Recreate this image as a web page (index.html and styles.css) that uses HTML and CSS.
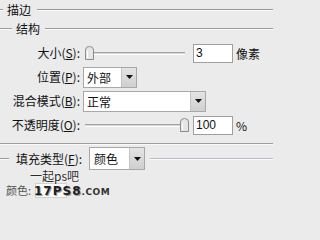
FILE: index.html
```html
<!DOCTYPE html>
<html lang="zh">
<head>
<meta charset="utf-8">
<link rel="stylesheet" href="styles.css">
</head>
<body>
<div class="panel">
  <div class="legend l1"><span class="rule short"></span><span class="ltext">描边</span><span class="rule grow"></span></div>
  <div class="legend l2"><span class="rule mid"></span><span class="ltext">结构</span><span class="rule grow"></span></div>
  <div class="grid">
    <div class="label">大小(<u>S</u>):</div>
    <div class="ctrl">
      <div class="slider"><span class="track"></span><svg class="thumb t-left" width="9" height="14" viewBox="0 0 9 14"><path d="M0.5 13.5 V4 Q0.5 0.5 4.5 0.5 Q8.5 0.5 8.5 4 V13.5 Z" fill="#e6e6e6" stroke="#8c8c8c"/><path d="M2.5 12 V5" stroke="#fff"/></svg></div>
      <div class="num">3</div><div class="unit">像素</div>
    </div>
    <div class="label">位置(<u>P</u>):</div>
    <div class="ctrl">
      <div class="select s-small"><span class="stext">外部</span><span class="arrow"><svg width="7" height="4" viewBox="0 0 7 4"><path d="M0 0 H7 L3.5 4 Z" fill="#111"/></svg></span></div>
    </div>
    <div class="label">混合模式(<u>B</u>):</div>
    <div class="ctrl">
      <div class="select s-wide"><span class="stext">正常</span><span class="arrow"><svg width="7" height="4" viewBox="0 0 7 4"><path d="M0 0 H7 L3.5 4 Z" fill="#111"/></svg></span></div>
    </div>
    <div class="label">不透明度(<u>O</u>):</div>
    <div class="ctrl">
      <div class="slider"><span class="track"></span><svg class="thumb t-right" width="9" height="14" viewBox="0 0 9 14"><path d="M0.5 13.5 V4 Q0.5 0.5 4.5 0.5 Q8.5 0.5 8.5 4 V13.5 Z" fill="#e6e6e6" stroke="#8c8c8c"/><path d="M2.5 12 V5" stroke="#fff"/></svg></div>
      <div class="num">100</div><div class="unit">%</div>
    </div>
  </div>
  <div class="sep"></div>
  <div class="legend l3">
    <span class="rule tiny"></span>
    <span class="ltext fill-label">填充类型(<u>F</u>):</span>
    <div class="select s-fill"><span class="stext">颜色</span><span class="arrow"><svg width="7" height="4" viewBox="0 0 7 4"><path d="M0 0 H7 L3.5 4 Z" fill="#111"/></svg></span></div>
    <span class="rule grow lav"></span>
  </div>
  <div class="under">
    <span class="color-label">颜色:</span><span class="swatch"></span>
  </div>
  <div class="watermark">
    <div class="wm1">一起ps吧</div>
    <div class="wm2"><span class="big">17PS8</span><span class="small">.COM</span></div>
  </div>
</div>
</body>
</html>
```
FILE: styles.css
```css
html, body {
  margin: 0;
  padding: 0;
  background: #ebebeb;
}
body {
  width: 273px;
  height: 216px;
  overflow: hidden;
  font-family: "Noto Sans CJK SC", "Noto Sans", sans-serif;
  font-size: 12px;
  color: #111;
}
u { text-decoration: underline; }
.panel {
  position: relative;
  display: flex;
  flex-direction: column;
  height: 216px;
}
.legend {
  display: flex;
  align-items: center;
}
.l1 { height: 20px; }
.l2 { height: 18px; margin-bottom: 3px; }
.rule {
  height: 0;
  border-top: 1px solid #9a9a9a;
  border-bottom: 1px solid #fbfbfb;
}
.rule.short { width: 3px; margin-right: 4px; }
.rule.mid { width: 12px; margin-right: 4px; }
.rule.tiny { width: 9px; margin-right: 7px; }
.rule.grow { flex: 1; }
.l1 .ltext { margin-right: 6px; line-height: 14px; }
.l2 .ltext { margin-right: 5px; line-height: 14px; }
.grid {
  display: grid;
  grid-template-columns: 80px 1fr;
  grid-auto-rows: 24px;
}
.label {
  text-align: right;
  line-height: 24px;
  white-space: nowrap;
}
.ctrl {
  display: flex;
  align-items: center;
  padding-left: 3px;
}
.slider {
  position: relative;
  width: 100px;
  height: 16px;
  margin-left: 2px;
  display: flex;
  align-items: center;
}
.track {
  display: block;
  width: 100%;
  height: 1px;
  background: #d4d4d4;
  border-top: 1px solid #a4a4a4;
  border-bottom: 1px solid #fff;
}
.thumb {
  position: absolute;
  top: 1px;
}
.t-left { left: 0; }
.t-right { left: 95px; }
.num {
  margin-left: 8px;
  width: 36px;
  height: 17px;
  background: #fff;
  border: 1px solid #9f9f9f;
  font-family: "Liberation Sans", Arial, sans-serif;
  font-size: 12px;
  line-height: 17px;
  padding-left: 2px;
  box-sizing: content-box;
}
.unit {
  margin-left: 3px;
  line-height: 17px;
}
.select {
  display: flex;
  height: 19px;
  background: #fff;
  border: 1px solid #a8a8a8;
}
.stext {
  flex: 1;
  padding-left: 3px;
  line-height: 19px;
}
.arrow {
  width: 14px;
  border-left: 1px solid #c4c4c4;
  background: linear-gradient(#e4e4e4, #cfcfcf);
  display: flex;
  align-items: center;
  justify-content: center;
}
.s-small { width: 52px; }
.s-wide { width: 121px; }
.sep {
  margin-top: 6px;
  height: 0;
  border-top: 1px solid #9c9c9c;
  border-bottom: 1px solid #fafafa;
}
.l3 { height: 25px; margin-top: 1px; }
.fill-label { line-height: 14px; margin-right: 7px; white-space: nowrap; }
.s-fill { width: 54px; height: 21px; margin-right: 5px; }
.s-fill .stext { line-height: 21px; padding-left: 4px; }
.rule.lav { border-top-color: #b9b9c9; }
.under {
  display: flex;
  align-items: center;
  margin-top: 12px;
  padding-left: 6px;
  height: 14px;
}
.color-label { color: #555; font-size: 11px; }
.swatch {
  margin-left: 4px;
  width: 30px;
  height: 13px;
  background: #fbfbfb;
  border: 1px solid #cfcfcf;
}
.watermark {
  position: absolute;
  left: 29px;
  top: 169px;
  color: #2a2a2a;
}
.wm1 {
  font-size: 12px;
  line-height: 13px;
  letter-spacing: 0;
  margin-left: 1px;
  text-shadow: 0 0 1px #fff, 0 0 2px #fff;
}
.wm2 {
  margin-top: 3px;
  margin-left: 5px;
  line-height: 10px;
  white-space: nowrap;
}
.wm2 .big {
  font-family: "DejaVu Sans", sans-serif;
  font-weight: 900;
  font-size: 12px;
  letter-spacing: 1px;
  color: #1f1f1f;
  text-shadow: 1px 1px 0 #999;
}
.wm2 .small {
  font-family: "DejaVu Sans", sans-serif;
  font-weight: 700;
  font-size: 9px;
  color: #333;
  letter-spacing: 0.5px;
}
```
